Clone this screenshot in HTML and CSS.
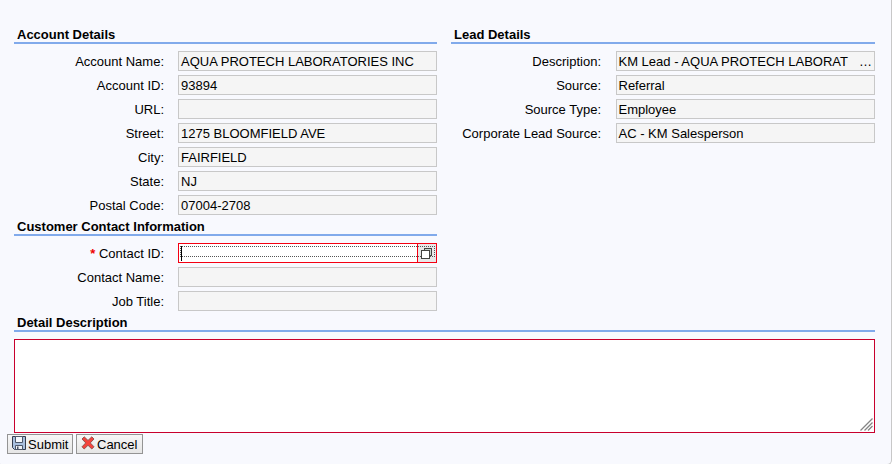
FILE: index.html
```html
<!DOCTYPE html>
<html lang="en">
<head>
<meta charset="utf-8">
<title>Lead</title>
<link rel="stylesheet" href="styles.css">
</head>
<body>
<main class="panel">
  <div class="columns">
    <div class="column">
      <section>
        <h2 class="heading">Account Details</h2>
        <div class="rows">
          <div class="row"><span class="label">Account Name:</span><span class="field">AQUA PROTECH LABORATORIES INC</span></div>
          <div class="row"><span class="label">Account ID:</span><span class="field">93894</span></div>
          <div class="row"><span class="label">URL:</span><span class="field"></span></div>
          <div class="row"><span class="label">Street:</span><span class="field">1275 BLOOMFIELD AVE</span></div>
          <div class="row"><span class="label">City:</span><span class="field">FAIRFIELD</span></div>
          <div class="row"><span class="label">State:</span><span class="field">NJ</span></div>
          <div class="row"><span class="label">Postal Code:</span><span class="field">07004-2708</span></div>
        </div>
      </section>
      <section>
        <h2 class="heading">Customer Contact Information</h2>
        <div class="rows">
          <div class="row">
            <span class="label"><span class="required">*</span> Contact ID:</span>
            <span class="field lookup">
              <span class="lookup-input"><span class="caret"></span></span>
              <span class="lookup-button">
                <svg width="18" height="18" viewBox="0 0 18 18" shape-rendering="crispEdges">
                  <rect x="6.500" y="4.500" width="7" height="7" fill="#c5d5cf" stroke="#444440"/>
                  <rect x="3.500" y="6.500" width="8" height="8" fill="#fff" stroke="#444440"/>
                </svg>
              </span>
              <span class="focus-ring"></span>
            </span>
          </div>
          <div class="row"><span class="label">Contact Name:</span><span class="field"></span></div>
          <div class="row"><span class="label">Job Title:</span><span class="field"></span></div>
        </div>
      </section>
    </div>
    <section class="column lead">
      <h2 class="heading">Lead Details</h2>
      <div class="rows">
        <div class="row"><span class="label">Description:</span><span class="field split"><span>KM Lead - AQUA PROTECH LABORAT</span><span class="more">…</span></span></div>
        <div class="row"><span class="label">Source:</span><span class="field">Referral</span></div>
        <div class="row"><span class="label">Source Type:</span><span class="field">Employee</span></div>
        <div class="row"><span class="label">Corporate Lead Source:</span><span class="field">AC - KM Salesperson</span></div>
      </div>
    </section>
  </div>
  <section class="detail">
    <h2 class="heading">Detail Description</h2>
    <div class="textarea">
      <svg width="13" height="13" viewBox="0 0 13 13" fill="none" stroke="#858585" stroke-width="1.300">
        <path d="M.5 12.500 12.500.5M4.500 12.500l8-8M8 12.500l4.500-4.500"/>
      </svg>
    </div>
  </section>
  <div class="actions">
    <button class="button" type="button">
      <svg class="icon" width="14" height="14" viewBox="0 0 14 14">
        <path d="M.5.5h13v13h-11l-2-2z" fill="#a9c0df" stroke="#343c4c"/>
        <path d="M3.500.5h7v6h-7z" fill="#f4f8fd" stroke="#4c5668"/>
        <path d="M3.500 9.500h7v4h-7z" fill="#eef1f5" stroke="#4c5668"/>
        <path d="M5 10.500h1.500V13H5z" fill="#4c5668"/>
      </svg>Submit
    </button>
    <button class="button cancel" type="button">
      <svg class="icon" width="14" height="14" viewBox="0 0 14 14">
        <path d="M1 3 3.200.8 7 4.400 10.800.8 13 3 9.300 6.900 13 10.800 10.800 13 7 9.300 3.200 13 1 10.800l3.700-3.900z" fill="#f4433c" stroke="#7e4440" stroke-width=".8"/>
      </svg>Cancel
    </button>
  </div>
</main>
</body>
</html>
```
FILE: styles.css
```css
* { box-sizing: border-box; }

body {
  margin: 0;
  height: 464px;
  overflow: hidden;
  background: #fff;
  color: #000;
  font: 13px/18px "Liberation Sans", Arial, sans-serif;
}

.panel {
  width: 895px;
  height: 465px;
  margin-left: -3px;
  padding: 24px 16px 0 16px;
  border: 1px solid #c8c8c8;
  border-top: 0;
  border-radius: 0 0 5px 5px;
  background: #f8f9fe;
}

.columns {
  display: grid;
  grid-template-columns: 423px 424px;
  column-gap: 14px;
}

.heading {
  height: 20px;
  margin: 0;
  padding-left: 3px;
  border-bottom: 2px solid #81aaeb;
  font-size: 13px;
  font-weight: bold;
  line-height: 22px;
}

.rows {
  display: grid;
  row-gap: 4px;
  padding: 7px 0 1px;
}

.row {
  display: grid;
  grid-template-columns: 150px 259px;
  column-gap: 14px;
}

.lead .row {
  grid-template-columns: 150px 259px;
  column-gap: 15px;
}

.label {
  height: 20px;
  line-height: 22px;
  text-align: right;
}

.required { color: #e00; font-weight: bold; }

.field {
  height: 20px;
  padding: 0 2px;
  border: 1px solid #c8c8c8;
  background: #f5f5f5;
  line-height: 19px;
  white-space: nowrap;
  overflow: hidden;
}

.lead .field { padding-left: 1.5px; }

.split {
  display: flex;
  justify-content: space-between;
}

.lookup {
  position: relative;
  display: flex;
  padding: 0;
  border-color: #f40012;
  background: #fff;
}

.lookup-input {
  flex: 1;
  padding: 2px 0 0 2px;
}

.caret {
  display: block;
  width: 1px;
  height: 15px;
  background: #000;
}

.lookup-button {
  width: 19px;
  border-left: 1px solid #f40012;
  background: #e8e8e8;
}

.lookup-button svg {
  position: relative;
  z-index: 1;
  display: block;
}

.focus-ring {
  position: absolute;
  top: 2px;
  right: 1px;
  left: 1px;
  height: 11px;
  border: 1px dotted #555;
}

.textarea {
  display: flex;
  align-items: flex-end;
  justify-content: flex-end;
  height: 94px;
  margin-top: 7px;
  padding: 0 1px 1px 0;
  border: 1px solid #c8002d;
  background: #fff;
}

.actions {
  display: flex;
  gap: 3px;
  margin: 1px 0 0 -7px;
}

.button {
  display: flex;
  align-items: center;
  width: 66px;
  height: 20px;
  padding: 2px 0 0 4px;
  border: 1px solid #949494;
  background: linear-gradient(#f7f7f7, #e6e6e6);
  color: #000;
  font: inherit;
}

.icon {
  flex: none;
  margin: -4px 2px 0 0;
}

.cancel { width: 67px; }
```
